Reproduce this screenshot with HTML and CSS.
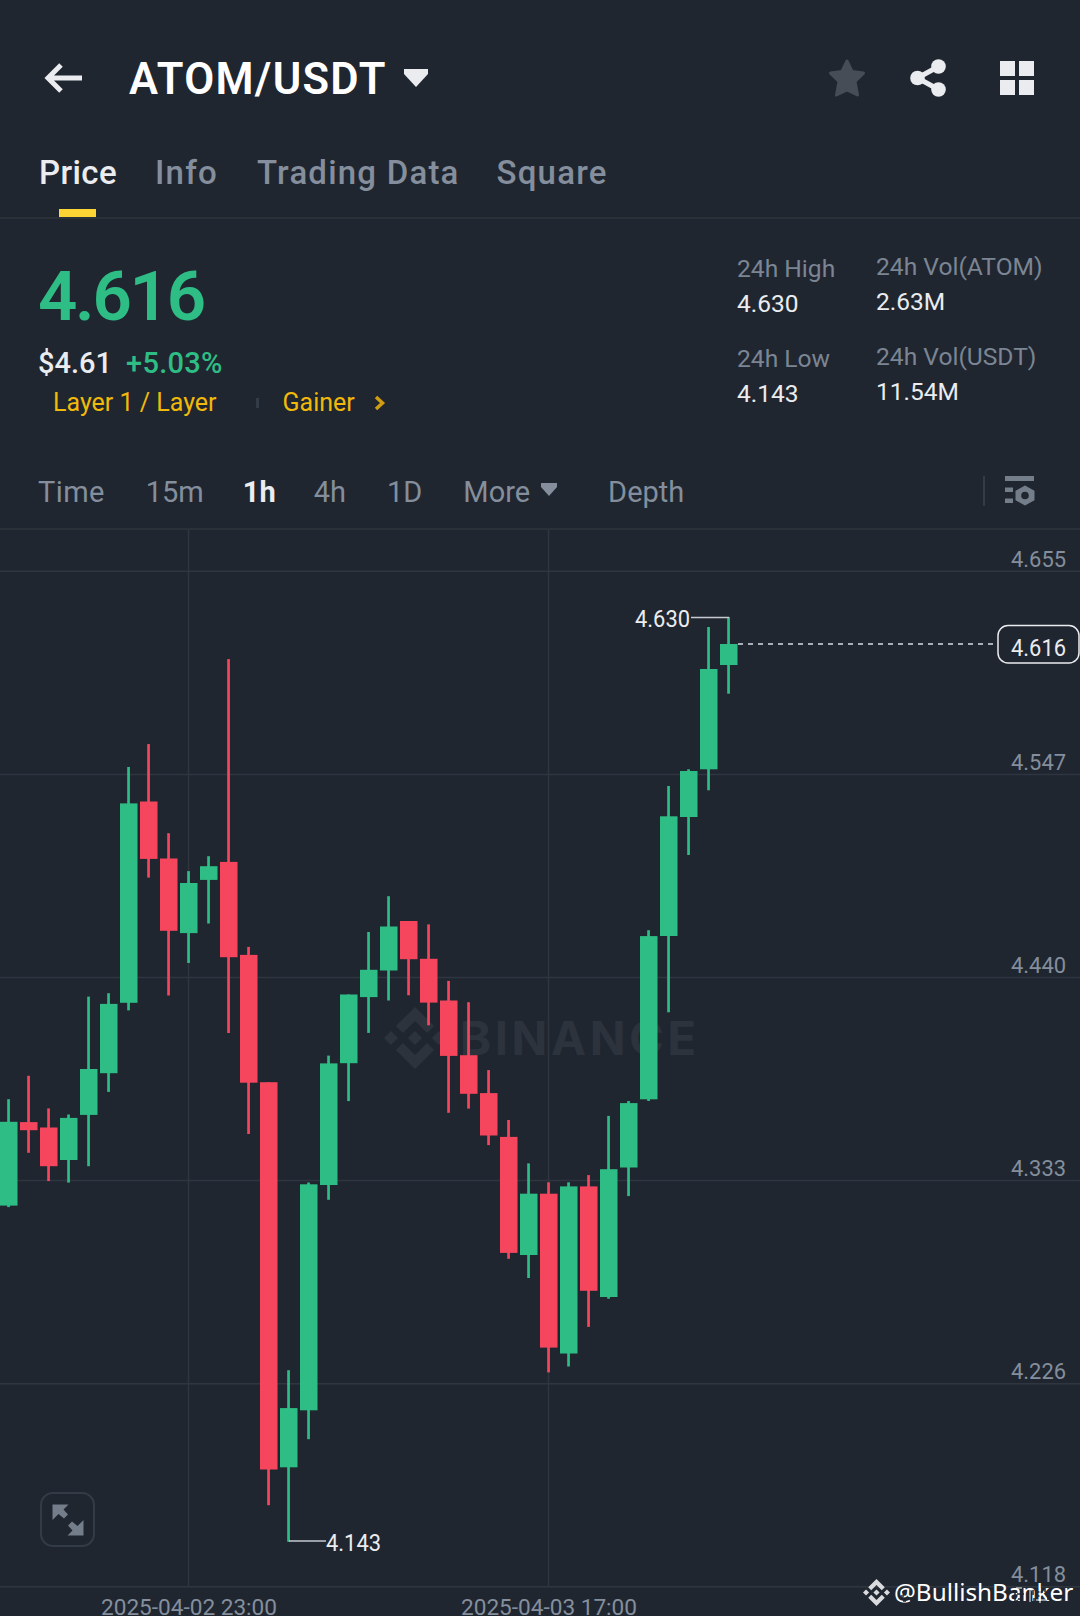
FILE: index.html
```html
<!DOCTYPE html>
<html lang="en">
  <head>
    <meta charset="UTF-8" />
    <meta name="viewport" content="width=device-width, initial-scale=1.0" />
    <title>ATOM/USDT</title>
    <link rel="stylesheet" href="styles.css">
  </head>
  <body>
    <!-- Header -->
    <header class="header">
      <svg class="back" width="40" height="32" viewBox="0 0 40 32">
        <path d="M39 16H6M18 3L5 16l13 13" fill="none" stroke="#eaecef" stroke-width="5" />
      </svg>
      <h1 class="pair">ATOM/USDT</h1>
      <svg class="pair-caret" width="24" height="18" viewBox="0 0 24 18">
        <path d="M0 0h24v5L12 18 0 5z" fill="#eaecef" />
      </svg>
      <div class="header-icons">
        <svg width="38" height="38" viewBox="0 0 38 38">
          <path d="M19 2l5 10.500 11.500 1.600-8.500 8.400 2.500 13.500L19 31 8.500 36 11 22.500 2.500 14.100 14 12.500z" fill="#474d57" stroke="#474d57" stroke-width="3" stroke-linejoin="round" />
        </svg>
        <svg width="36" height="38" viewBox="0 0 36 38">
          <path d="M28.500 7.500L7.500 19l21 11.500" fill="none" stroke="#eaecef" stroke-width="5" />
          <circle cx="28.500" cy="7.500" r="7.300" fill="#eaecef" />
          <circle cx="7.500" cy="19" r="7.300" fill="#eaecef" />
          <circle cx="28.500" cy="30.500" r="7.300" fill="#eaecef" />
        </svg>
        <svg width="34" height="34" viewBox="0 0 34 34">
          <path d="M0 0h15v15H0zM19 0h15v15H19zM0 19h15v15H0zM19 19h15v15H19z" fill="#eaecef" />
        </svg>
      </div>
    </header>

    <!-- Tabs -->
    <nav class="tabs">
      <div class="tab active">Price</div>
      <div class="tab info">Info</div>
      <div class="tab">Trading Data</div>
      <div class="tab">Square</div>
    </nav>

    <!-- Ticker -->
    <section class="ticker">
      <div class="ticker-main">
        <div class="last-price">4.616</div>
        <div class="sub-price"><span class="fiat">$4.61</span><span class="change">+5.03%</span></div>
        <div class="tags">
          <span class="tag-layer">Layer 1 / Layer</span>
          <span class="tag-sep"></span>
          <span class="tag-gainer">Gainer</span>
          <svg width="12" height="16" viewBox="0 0 12 16">
            <path d="M2 2l6.500 6L2 14" fill="none" stroke="#d09c10" stroke-width="3.500" />
          </svg>
        </div>
      </div>
      <div class="stats">
        <div class="stats-col">
          <div class="stat"><div class="label">24h High</div><div class="value">4.630</div></div>
          <div class="stat"><div class="label">24h Low</div><div class="value">4.143</div></div>
        </div>
        <div class="stats-col vol">
          <div class="stat"><div class="label">24h Vol(ATOM)</div><div class="value">2.63M</div></div>
          <div class="stat"><div class="label">24h Vol(USDT)</div><div class="value">11.54M</div></div>
        </div>
      </div>
    </section>

    <!-- Intervals -->
    <div class="intervals">
      <span>Time</span>
      <span>15m</span>
      <span class="selected">1h</span>
      <span>4h</span>
      <span>1D</span>
      <span class="more">More
        <svg width="16" height="13" viewBox="0 0 16 13"><path d="M0 0h16v4L8 13 0 4z" fill="#848e9c" /></svg>
      </span>
      <span>Depth</span>
      <div class="settings">
        <svg width="30" height="30" viewBox="0 0 30 30">
          <path d="M0 0h29v5H0zM0 11.500h8v4.500H0zM0 22.500h8v4.500H0z" fill="#747d8a" />
          <path fill-rule="evenodd" d="M20 9.500l9.500 5.300v9.400L20 29.500l-9.500-5.300v-9.400zM20 15.700a3.800 3.800 0 1 0 0 7.600 3.800 3.800 0 0 0 0-7.600z" fill="#747d8a" />
        </svg>
      </div>
    </div>

    <!-- Chart -->
    <div class="chart">
      <svg id="chart" width="1080" height="1086" viewBox="0 530 1080 1086">
        <g id="grid"></g>
        <g class="brand">
          <svg x="384" y="1007" width="62" height="62" viewBox="0 0 126.610 126.610"><use href="#logo" /></svg>
          <text x="460" y="1055" textLength="236">BINANCE</text>
        </g>
        <g id="candles"></g>
        <g id="labels">
          <path d="M691 617.500H729" class="pointer" />
          <text x="635" y="626.500" textLength="55" lengthAdjust="spacingAndGlyphs" class="mark">4.630</text>
          <path d="M289 1541H326" class="pointer" />
          <text x="326" y="1550.500" textLength="55" lengthAdjust="spacingAndGlyphs" class="mark">4.143</text>
          <path d="M738 644H997" class="last-line" />
          <rect x="998" y="625.500" width="81" height="37.500" rx="10" class="last-box" />
          <text x="1011" y="655.500" textLength="55" lengthAdjust="spacingAndGlyphs" class="mark">4.616</text>
          <text x="101" y="1615" textLength="176" lengthAdjust="spacingAndGlyphs" class="axis">2025-04-02 23:00</text>
          <text x="461" y="1615" textLength="176" lengthAdjust="spacingAndGlyphs" class="axis">2025-04-03 17:00</text>
        </g>
        <defs>
          <path id="logo" d="M38.730 53.200l24.590-24.580 24.600 24.600 14.300-14.310L63.320 0l-38.900 38.900zM0 63.310l14.300-14.310 14.310 14.310-14.310 14.300zM38.730 73.410l24.590 24.590 24.600-24.600 14.310 14.290-38.900 38.910-38.910-38.880zM98 63.310l14.300-14.310 14.310 14.300-14.310 14.320zM77.830 63.300L63.320 48.780 48.800 63.300l14.520 14.500z" />
        </defs>
      </svg>
      <div class="expand">
        <svg width="32" height="32" viewBox="0 0 32 32">
          <path d="M0.500 0.500h16l-5 5 4.500 5-4 4-5.500-4.500-6 6zM31.500 31.500h-16l5-5-4.500-5 4-4 5.500 4.500 6-6z" fill="#747d8a" />
        </svg>
      </div>
      <div class="author">
        <svg width="27" height="27" viewBox="0 0 126.610 126.610" fill="#d8dade"><use href="#logo" /></svg>
        <span>@BullishBanker</span>
        <!-- broken pixels over the name -->
        <svg class="specks" width="162" height="24" viewBox="0 0 162 24">
          <path d="M8 11h4M7 15h3M12 17h5M9 20h3" />
          <path d="M121 10v10M127 9v12M123 13h7M124 18h5M133 12h3M134 17h4M139 9v5M140 17v4M144 11h5M143 15h3M149 17v4M151 8v3M154 13v6" />
          <path d="M122 7h6M136 7v14M146 7v15M142 19h10" class="light" />
        </svg>
      </div>
    </div>
    <script src="chart.js"></script>
  </body>
</html>
```
FILE: styles.css
```css
/* Base */
body {
  margin: 0;
  height: 1616px;
  overflow: hidden;
  background-color: #202630;
  color: #eaecef;
  font-family: Roboto, "Liberation Sans", sans-serif;
}
svg {
  display: block;
  flex: none;
}
/* Header */
.header {
  display: flex;
  align-items: center;
  box-sizing: border-box;
  height: 156px;
  padding: 0 46px 1px 43px;
}
.pair {
  margin: 3px 0 0 46px;
  font-size: 43.5px;
  font-weight: 600;
  letter-spacing: 1.3px;
  width: 257px;
  color: #fff;
  white-space: nowrap;
}
.pair-caret {
  margin-left: 18px;
}
.header-icons {
  display: flex;
  align-items: center;
  margin-left: auto;
}
.header-icons svg:nth-child(2) {
  margin: 0 54px 0 44px;
}
/* Tabs */
.tabs {
  display: flex;
  gap: 37px;
  box-sizing: border-box;
  height: 63px;
  padding-left: 39px;
  border-bottom: 2px solid #2b3139;
  font-size: 33px;
  font-weight: 500;
  line-height: 33px;
  letter-spacing: 1.2px;
  color: #848e9c;
}
.tab {
  display: flex;
  flex-direction: column;
  align-items: center;
  justify-content: space-between;
}
.tab.active {
  letter-spacing: 0.4px;
  color: #eaecef;
}
.tab.active::after {
  content: "";
  width: 37px;
  height: 8px;
  margin-right: 2px;
  background-color: #fcd535;
}
.tab.info {
  margin: 0 2px 0 1px;
}
/* Ticker */
.ticker {
  display: flex;
  justify-content: space-between;
  box-sizing: border-box;
  height: 235px;
  padding: 32px 39px 0 38px;
}
.ticker-main {
  padding-top: 9px;
}
.last-price {
  font-size: 69px;
  font-weight: 600;
  line-height: 73px;
  letter-spacing: -2.3px;
  color: #2ebd85;
}
.sub-price {
  display: flex;
  gap: 14px;
  margin-top: 10px;
  font-size: 29px;
  font-weight: 500;
  line-height: 40px;
}
.change {
  letter-spacing: 0.3px;
  color: #2ebd85;
}
.tags {
  display: flex;
  align-items: center;
  padding: 1px 0 0 15px;
  font-size: 25px;
  line-height: 38px;
  color: #f0b90b;
}
.tag-sep {
  width: 3px;
  height: 10px;
  margin: 0 24px 0 39px;
  background-color: #333b47;
}
.tag-gainer {
  margin-right: 19px;
}
.stats {
  display: flex;
}
.stats-col {
  display: flex;
  flex-direction: column;
  gap: 20px;
  width: 139px;
  font-size: 24.6px;
  line-height: 35px;
}
.stats-col.vol {
  width: 165px;
  margin-top: -2px;
}
.stat {
  white-space: nowrap;
}
.label {
  color: #7b8593;
}
.value {
  font-size: 24.5px;
}
/* Intervals */
.intervals {
  display: flex;
  align-items: center;
  box-sizing: border-box;
  gap: 41px;
  height: 76px;
  padding: 1px 45px 0 38px;
  border-bottom: 2px solid #2b3139;
  font-size: 29px;
  color: #848e9c;
}
.intervals span:first-child {
  letter-spacing: 0.4px;
}
.intervals .selected {
  margin: 0 -3px 0 -2px;
  font-weight: 700;
  color: #eaecef;
}
.more {
  display: flex;
  align-items: center;
  gap: 11px;
  margin-right: 10px;
}
.more svg {
  margin-top: -4px;
}
.settings {
  margin: -2px 0 0 auto;
  padding-left: 20px;
  border-left: 2px solid #333b47;
}
/* Chart */
.chart {
  position: relative;
}
.grid-line {
  stroke: #2f3640;
  stroke-width: 1.5;
}
.up {
  fill: #2ebd85;
}
.down {
  fill: #f6465d;
}
.brand {
  fill: #2d333d;
  font-size: 47px;
  font-weight: 700;
  font-family: Inter, sans-serif;
}
.axis {
  fill: #848e9c;
  font-size: 22.5px;
}
.mark {
  fill: #eaecef;
  font-size: 23px;
}
.pointer {
  stroke: #c5c9d0;
  stroke-width: 1.5;
}
.last-line {
  stroke: #a9afb9;
  stroke-width: 2;
  stroke-dasharray: 5 5;
}
.last-box {
  fill: #202630;
  stroke: #eaecef;
  stroke-width: 1.5;
}
/* Overlays on the chart */
.expand {
  position: absolute;
  left: 40px;
  top: 962px;
  display: flex;
  align-items: center;
  justify-content: center;
  box-sizing: border-box;
  width: 55px;
  height: 55px;
  border: 2px solid #333b47;
  border-radius: 13px;
}
.author {
  position: absolute;
  left: 863px;
  top: 1044px;
  display: flex;
  align-items: center;
  gap: 4px;
  font-family: "Noto Sans", sans-serif;
  font-size: 24.3px;
  line-height: 36px;
  color: #fff;
}
.specks {
  position: absolute;
  left: 31px;
  top: 7px;
  stroke: #202630;
  stroke-width: 1.5;
}
.specks .light {
  stroke: #fff;
  stroke-width: 1;
}
```
FILE: chart.js
```js
// [open, close, high, low] as y positions, one candle every 20px
const candles = [
  [1205.6, 1121.8, 1099.2, 1207.1],
  [1122.1, 1130.2, 1075.8, 1152.8],
  [1127.5, 1166.2, 1108.4, 1181.1],
  [1160, 1117.9, 1114.5, 1182.6],
  [1114.9, 1069, 996.6, 1166.2],
  [1073.2, 1003.9, 993.2, 1091.9],
  [1002.8, 803.4, 767, 1010.4],
  [801.5, 858.9, 744.1, 877.6],
  [858.5, 930.8, 833.2, 995.5],
  [933.1, 883, 871.1, 963],
  [879.9, 866.2, 856.2, 923.5],
  [861.9, 957.2, 659.1, 1033],
  [954.9, 1082.7, 946.9, 1134],
  [1082.2, 1469.5, 1082.2, 1505.2],
  [1467.3, 1408.1, 1370.2, 1541.8],
  [1410.3, 1184.3, 1182.5, 1439.2],
  [1185, 1063.4, 1055.6, 1199.8],
  [1063.2, 994.5, 994.5, 1101.1],
  [997.1, 969.8, 932, 1032.9],
  [970.5, 926.5, 896.2, 1000.5],
  [921, 959.2, 921, 995.3],
  [958.8, 1002.6, 924.4, 1025.3],
  [1000.5, 1055.9, 980.9, 1112.8],
  [1055.2, 1093.8, 1002.2, 1108.6],
  [1093.1, 1135.5, 1070.1, 1145.1],
  [1136.9, 1252.9, 1120, 1258.8],
  [1255, 1193.7, 1163.4, 1278],
  [1193.7, 1347.6, 1182.3, 1372.4],
  [1353.5, 1186.4, 1182.3, 1366.5],
  [1186.4, 1290.8, 1175.1, 1326.9],
  [1297, 1169.2, 1115.9, 1298.7],
  [1167.5, 1103.1, 1101, 1196.1],
  [1099.3, 936.1, 930.2, 1101],
  [936, 816.3, 786, 1012.3],
  [817, 771, 769.3, 855],
  [769.3, 669, 627, 790.3],
  [665, 644, 617, 693.7],
];
const prices = ["4.655", "4.547", "4.440", "4.333", "4.226", "4.118"];

let grid = "";
let labels = "";
prices.forEach((price, i) => {
  const y = 571.3 + i * 203.1;
  grid += `<line class="grid-line" x1="0" x2="1080" y1="${y}" y2="${y}" />`;
  labels += `<text class="axis" x="1011" y="${y - 4.8}" textLength="55" lengthAdjust="spacingAndGlyphs">${price}</text>`;
});
[188.5, 548.5].forEach((x) => {
  grid += `<line class="grid-line" x1="${x}" x2="${x}" y1="530" y2="1587" />`;
});
document.getElementById("grid").innerHTML = grid;
document.getElementById("labels").innerHTML += labels;

document.getElementById("candles").innerHTML = candles
  .map(([open, close, high, low], i) => {
    const x = i * 20;
    const top = Math.min(open, close);
    const height = Math.abs(open - close);
    return `<g class="${close < open ? "up" : "down"}">
      <rect x="${x + 7.2}" y="${high}" width="2.7" height="${low - high}" />
      <rect x="${x}" y="${top}" width="17.500" height="${height}" />
    </g>`;
  })
  .join("");
```
